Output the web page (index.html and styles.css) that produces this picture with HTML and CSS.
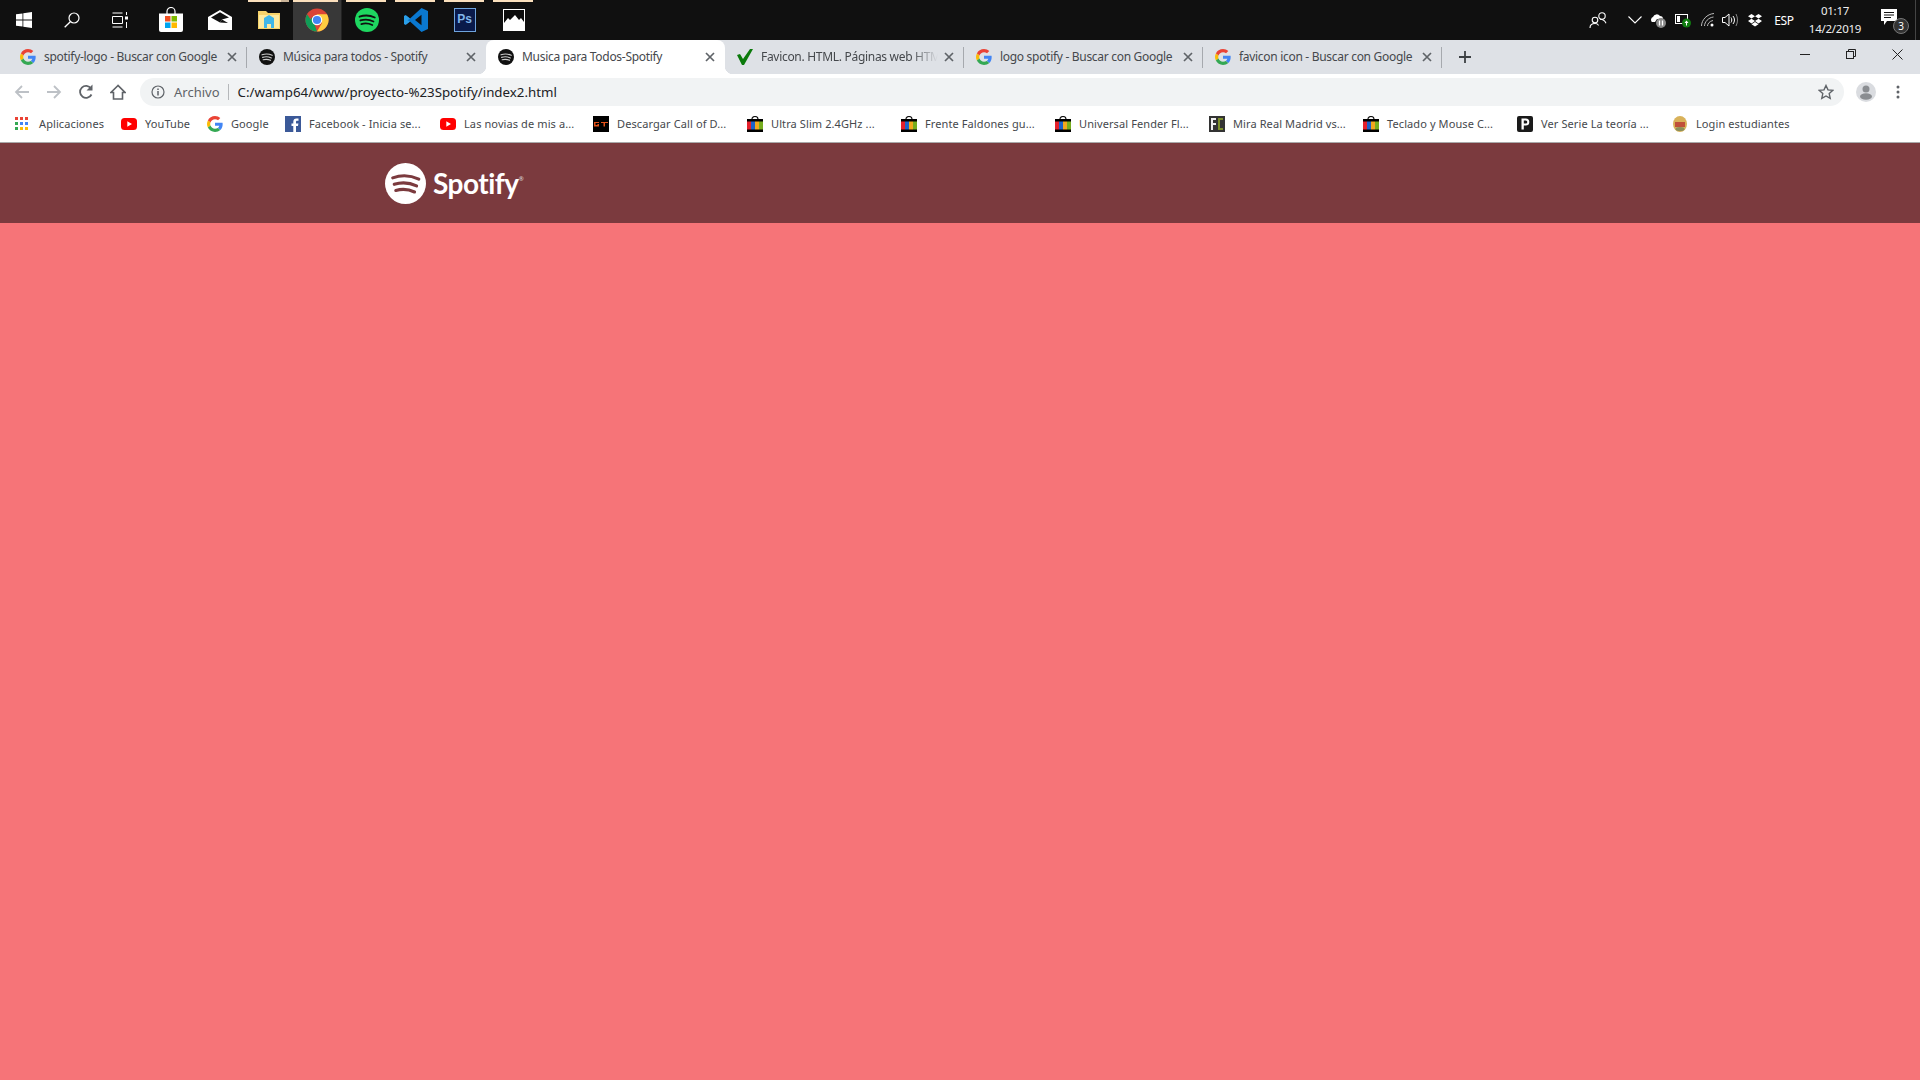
FILE: index.html
```html
<!DOCTYPE html>
<html lang="es">
<head>
<meta charset="utf-8">
<title>Musica para Todos-Spotify</title>
<link rel="stylesheet" href="styles.css">
</head>
<body>
<svg class="defs" width="0" height="0" aria-hidden="true">
  <symbol id="g" viewBox="0 0 48 48">
    <path fill="#EA4335" d="M24 9.5c3.5 0 6.700 1.300 9.100 3.500l6.800-6.800C35.800 2.400 30.300 0 24 0 14.600 0 6.500 5.400 2.600 13.200l7.900 6.100C12.400 13.600 17.700 9.500 24 9.500z"/>
    <path fill="#4285F4" d="M47 24.500c0-1.600-.1-3.100-.4-4.500H24v9h12.900c-.6 3-2.200 5.500-4.700 7.200l7.700 6C44.400 38 47 31.900 47 24.500z"/>
    <path fill="#FBBC05" d="M10.500 28.700c-.5-1.500-.8-3-.8-4.700s.3-3.200.8-4.700l-7.900-6.100C1 16.500 0 20.100 0 24s1 7.500 2.600 10.800l7.900-6.100z"/>
    <path fill="#34A853" d="M24 48c6.500 0 11.900-2.100 15.900-5.800l-7.700-6c-2.200 1.400-4.900 2.300-8.200 2.300-6.300 0-11.600-4.200-13.500-9.800l-7.900 6.100C6.500 42.600 14.600 48 24 48z"/>
  </symbol>
  <symbol id="spot" viewBox="0 0 40 40">
    <circle cx="20" cy="20" r="20" fill="currentColor"/>
    <path d="M7.500 14.500c8-2.800 18-2.300 25.500 1.300M9 20.800c7-2.200 15-1.700 21.800 1.600M10.500 26.800c6-1.700 12.500-1.300 18.300 1.500" fill="none" stroke="var(--wave)" stroke-width="3" stroke-linecap="round"/>
  </symbol>
  <symbol id="x" viewBox="0 0 16 16">
    <path d="M4 4l8 8M12 4l-8 8" stroke="#5f6368" stroke-width="1.700" fill="none"/>
  </symbol>
  <symbol id="shop" viewBox="0 0 16 16">
    <path d="M5 4.500V3a3 2.500 0 0 1 6 0v1.500" fill="none" stroke="#111" stroke-width="1.200"/>
    <rect y="3" width="16" height="13" fill="#000"/>
    <rect y="5.500" width="4" height="8" fill="#e5202b"/>
    <rect x="4" y="5.500" width="4" height="8" fill="#1c62c9"/>
    <rect x="8" y="5.500" width="4" height="8" fill="#f2a81d"/>
    <rect x="12" y="5.500" width="4" height="8" fill="#76ad1e"/>
  </symbol>
  <symbol id="yt" viewBox="0 0 16 16">
    <rect y="2" width="16" height="12" rx="3.500" fill="#f00"/>
    <path d="M6.300 5.300v5.400L11 8z" fill="#fff"/>
  </symbol>
</svg>

<div class="screen">
  <div class="taskbar">
    <div class="task-item narrow"><svg width="16" height="16" viewBox="0 0 16 16"><path fill="#fff" d="M0 2.300l6.500-.9v6.200H0zM7.300 1.300L16 0v7.600H7.300zM0 8.400h6.500v6.200L0 13.700zM7.300 8.400H16V16l-8.700-1.200z"/></svg></div>
    <div class="task-item narrow"><svg width="16" height="16" viewBox="0 0 16 16"><circle cx="10" cy="6" r="5" fill="none" stroke="#fff" stroke-width="1.200"/><path d="M6.300 9.700L.7 15.300" stroke="#fff" stroke-width="1.300"/></svg></div>
    <div class="task-item narrow"><svg width="16" height="16" viewBox="0 0 16 16" fill="none" stroke="#fff"><path d="M.5 1h10M.5 4.500h10v7H.5zM.5 15h10M14.500 0v3M14.500 10v6"/><rect x="13" y="4.500" width="3" height="3" fill="#fff" stroke="none"/></svg></div>
    <div class="task-item store"><svg width="24" height="26" viewBox="0 0 24 26"><path d="M8 7V4.500a4 4 0 0 1 8 0V7" fill="none" stroke="#fff" stroke-width="1.200"/><path d="M0 6.500h24V23a2 2 0 0 1-2 2H2a2 2 0 0 1-2-2z" fill="#fff"/><rect x="6" y="9" width="5.500" height="5.500" fill="#f25022"/><rect x="12.500" y="9" width="5.500" height="5.500" fill="#7fba00"/><rect x="6" y="15.500" width="5.500" height="5.500" fill="#00a4ef"/><rect x="12.500" y="15.500" width="5.500" height="5.500" fill="#ffb900"/></svg></div>
    <div class="task-item"><svg width="24" height="20" viewBox="0 0 24 20"><path d="M0 7L12 0l12 7v13H0z" fill="#fff"/><path d="M3 7.500l9-5.300 9 5.300-7 2-2 3z" fill="#101010"/><path d="M12 12.500l2-3 6 3.500z" fill="#101010"/></svg></div>
    <div class="task-item ind-folder"><svg width="22" height="20" viewBox="0 0 22 20"><path d="M0 1h8l2 2h12v16H0z" fill="#f6d36b"/><path d="M1 5h20v13H1z" fill="#fdeaa0"/><path d="M6 8l5-3 5 3v10h-3v-4H9v4H6z" fill="#3fb6e8"/></svg></div>
    <div class="task-item active ind-chrome"><svg width="24" height="24" viewBox="0 0 48 48"><circle cx="24" cy="24" r="23" fill="#db4437"/><path d="M24 47A23 23 0 0 1 4 35.500L14 18l10 29z" fill="#0f9d58"/><path d="M4 35.500A23 23 0 0 1 4.100 12.500L16 30l-2 8z" fill="#0f9d58"/><path d="M24 47a23 23 0 0 0 20-34.500H24l10 17.500z" fill="#ffcd40"/><circle cx="24" cy="24" r="10.500" fill="#fff"/><circle cx="24" cy="24" r="8.200" fill="#4285f4"/></svg></div>
    <div class="task-item ind"><svg class="spot-green" width="24" height="24"><use href="#spot"/></svg></div>
    <div class="task-item ind"><svg width="24" height="24" viewBox="0 0 24 24"><path d="M17.500 0L24 3v18l-6.500 3L6 13.500 1.800 16.800 0 16V8l1.800-.8L6 10.500zM17.500 6.800L11 12l6.500 5.200z" fill="#0a78d0"/><path d="M0 8l1.800-.8L6 10.500l-2.500 1.800 2.500 1.200L1.800 16.800 0 16z" fill="#2b9fe8"/></svg></div>
    <div class="task-item ind"><div class="ps">Ps</div></div>
    <div class="task-item ind"><svg width="22" height="22" viewBox="0 0 22 22"><rect width="22" height="22" fill="#fff"/><path d="M1 1h20v12l-3-4-2 2-4-5-5 5-2-2-4 5z" fill="#0c0c0c"/></svg></div>

    <div class="tray">
      <svg class="t-people" width="20" height="18" viewBox="0 0 20 18" fill="none" stroke="#fff" stroke-width="1.100"><circle cx="13" cy="5" r="3.200"/><circle cx="6" cy="9" r="2.800"/><path d="M1 17c0-3 2-4.500 5-4.500s3 1 3.500 2M11 8.300c3 0 5 1.500 6 4"/></svg>
      <svg class="t-chev" width="14" height="8" viewBox="0 0 14 8"><path d="M.5.500L7 7 13.500.5" fill="none" stroke="#fff" stroke-width="1.100"/></svg>
      <svg class="t-cloud" width="16" height="16" viewBox="0 0 16 16"><path d="M2 10a3 3 0 0 1 1-5 4 4 0 0 1 7-1c2 0 3 1 3 3H7l-2 3z" fill="#fff"/><circle cx="11" cy="11" r="5" fill="#8a8a8a"/><path d="M9.500 8.500v5M12.500 8.500v5" stroke="#fff" stroke-width="1.300"/></svg>
      <svg class="t-batt" width="16" height="16" viewBox="0 0 16 16"><rect x=".5" y="2.500" width="12" height="9" fill="none" stroke="#fff"/><rect x="2" y="4" width="3" height="6" fill="#fff"/><circle cx="11.500" cy="11" r="4.500" fill="#107c10"/><path d="M11.500 8.500l2 2.500h-1.500v2.500h-1V11h-1.500z" fill="#fff"/></svg>
      <svg class="t-wifi" width="14" height="14" viewBox="0 0 14 14" fill="none" stroke="#bbb" stroke-width="1"><path d="M.5 13C.5 7 6 1 13 .5M3.500 13c0-4 4-8.500 9-9M6.500 13c0-2 2-5 5.500-5.500"/><circle cx="11" cy="12" r="1.500" fill="#fff" stroke="none"/></svg>
      <svg class="t-sound" width="16" height="14" viewBox="0 0 16 14" fill="none" stroke="#fff"><path d="M.5 4.500h2.500L7 1v12L3 9.500H.5z"/><path d="M9 4.500c1 1.500 1 3.500 0 5M11 3c2 2.500 2 5.500 0 8"/><path d="M14 1c2 4 2 8 0 12" stroke="#888"/></svg>
      <svg class="t-drop" width="14" height="13" viewBox="0 0 14 13"><path d="M3.500 0L7 2.300 3.500 4.600 0 2.300zM10.500 0L14 2.300l-3.500 2.300L7 2.300zM3.500 4.800L7 7.100 3.500 9.400 0 7.100zM10.500 4.800L14 7.100l-3.500 2.300L7 7.100zM3.500 10.200L7 8l3.500 2.200L7 12.500z" fill="#fff"/></svg>
      <span class="t-lang">ESP</span>
      <div class="t-clock"><span>01:17</span><span>14/2/2019</span></div>
      <div class="t-note">
        <svg width="16" height="17" viewBox="0 0 16 17"><path d="M0 0h16v12H6l-3 4v-4H0z" fill="#fff"/><path d="M3 3.500h10M3 6h10M3 8.500h7" stroke="#101010"/></svg>
        <span class="note-badge">3</span>
      </div>
    </div>
  </div>

  <div class="tabbar">
    <div class="tab sep"><svg class="fav"><use href="#g"/></svg><span class="tab-title">spotify-logo - Buscar con Google</span><svg class="close"><use href="#x"/></svg></div>
    <div class="tab"><svg class="fav spot-black"><use href="#spot"/></svg><span class="tab-title">Música para todos - Spotify</span><svg class="close"><use href="#x"/></svg></div>
    <div class="tab current"><svg class="fav spot-black"><use href="#spot"/></svg><span class="tab-title">Musica para Todos-Spotify</span><svg class="close"><use href="#x"/></svg></div>
    <div class="tab sep"><svg class="fav" viewBox="0 0 16 16"><path d="M0 6l3-1 3 5L13 0h3L7 16H5z" fill="#0b7a0b"/></svg><span class="tab-title fade">Favicon. HTML. Páginas web HTML</span><svg class="close"><use href="#x"/></svg></div>
    <div class="tab sep"><svg class="fav"><use href="#g"/></svg><span class="tab-title">logo spotify - Buscar con Google</span><svg class="close"><use href="#x"/></svg></div>
    <div class="tab sep"><svg class="fav"><use href="#g"/></svg><span class="tab-title">favicon icon - Buscar con Google</span><svg class="close"><use href="#x"/></svg></div>
    <svg class="newtab" width="14" height="14" viewBox="0 0 14 14"><path d="M7 1v12M1 7h12" stroke="#3c4043" stroke-width="1.800"/></svg>
    <div class="winctl">
      <svg width="10" height="10" viewBox="0 0 10 10"><path d="M0 5.500h10" stroke="#222"/></svg>
      <svg width="10" height="10" viewBox="0 0 10 10" fill="none" stroke="#222"><rect x=".5" y="2.500" width="7" height="7"/><path d="M2.500 2.500v-2h7v7h-2"/></svg>
      <svg width="11" height="11" viewBox="0 0 11 11"><path d="M.5.500l10 10M10.500.5l-10 10" stroke="#222"/></svg>
    </div>
  </div>

  <div class="toolbar">
    <svg class="nav-back" width="16" height="16" viewBox="0 0 16 16" fill="none" stroke="#bdc1c6" stroke-width="1.800"><path d="M15 8H2M8 2L2 8l6 6"/></svg>
    <svg class="nav-fwd" width="16" height="16" viewBox="0 0 16 16" fill="none" stroke="#bdc1c6" stroke-width="1.800"><path d="M1 8h13M8 2l6 6-6 6"/></svg>
    <svg class="nav-reload" width="16" height="16" viewBox="0 0 16 16" fill="none" stroke="#5f6368" stroke-width="1.800"><path d="M13.500 10.500A6 6 0 1 1 13 4.500"/><path d="M14.500 0.500v6h-6z" fill="#5f6368" stroke="none"/></svg>
    <svg class="nav-home" width="16" height="16" viewBox="0 0 16 16" fill="none" stroke="#5f6368" stroke-width="1.600"><path d="M8 1.500L1 8.500h2.500V15h9V8.500H15z"/></svg>
    <div class="omnibox">
      <svg class="info" width="14" height="14" viewBox="0 0 14 14" fill="none" stroke="#5f6368" stroke-width="1.200"><circle cx="7" cy="7" r="6"/><path d="M7 6v4.500M7 3.500v1.500" stroke-width="1.500"/></svg>
      <span class="scheme">Archivo</span>
      <span class="url">C:/wamp64/www/proyecto-%23Spotify/index2.html</span>
      <svg class="star" width="16" height="16" viewBox="0 0 16 16"><path d="M8 1.500l2 4.400 4.700.5-3.500 3.200 1 4.700L8 12l-4.200 2.300 1-4.700L1.300 6.400 6 5.900z" fill="none" stroke="#5f6368" stroke-width="1.400"/></svg>
    </div>
    <svg class="avatar" width="20" height="20" viewBox="0 0 20 20"><circle cx="10" cy="10" r="10" fill="#dadce0"/><circle cx="10" cy="7" r="3.500" fill="#8a8d91"/><ellipse cx="10" cy="14.500" rx="6" ry="3.200" fill="#8a8d91"/></svg>
    <svg class="dots" width="4" height="14" viewBox="0 0 4 14"><circle cx="2" cy="2" r="1.500" fill="#5f6368"/><circle cx="2" cy="7" r="1.500" fill="#5f6368"/><circle cx="2" cy="12" r="1.500" fill="#5f6368"/></svg>
  </div>

  <div class="bookmarks">
    <div class="bm"><svg class="fav" viewBox="0 0 16 16"><rect x="0" y="1" width="3" height="3" fill="#ea4335"/><rect x="5" y="1" width="3" height="3" fill="#ea4335"/><rect x="10" y="1" width="3" height="3" fill="#ea4335"/><rect x="0" y="6" width="3" height="3" fill="#34a853"/><rect x="5" y="6" width="3" height="3" fill="#4285f4"/><rect x="10" y="6" width="3" height="3" fill="#4285f4"/><rect x="0" y="11" width="3" height="3" fill="#34a853"/><rect x="5" y="11" width="3" height="3" fill="#fbbc05"/><rect x="10" y="11" width="3" height="3" fill="#fbbc05"/></svg><span>Aplicaciones</span></div>
    <div class="bm"><svg class="fav"><use href="#yt"/></svg><span>YouTube</span></div>
    <div class="bm"><svg class="fav"><use href="#g"/></svg><span>Google</span></div>
    <div class="bm"><svg class="fav" viewBox="0 0 16 16"><rect width="16" height="16" fill="#3b5998"/><path d="M11 16v-6h2l.4-2.500H11V6c0-.8.3-1.300 1.300-1.300h1.200V2.500h-2C9.500 2.500 8.300 3.700 8.300 5.800v1.700H6.500V10h1.800v6z" fill="#fff"/></svg><span>Facebook - Inicia se...</span></div>
    <div class="bm"><svg class="fav"><use href="#yt"/></svg><span>Las novias de mis a...</span></div>
    <div class="bm"><svg class="fav" viewBox="0 0 16 16"><rect width="16" height="16" fill="#000"/><path d="M1 6h5v1H2.500v2H5V8.500H4V8h2v2.500H1zM8 6h7v1h-3v3.500h-1.500V7H8z" fill="#e2521a"/></svg><span>Descargar Call of D...</span></div>
    <div class="bm"><svg class="fav"><use href="#shop"/></svg><span>Ultra Slim 2.4GHz ...</span></div>
    <div class="bm"><svg class="fav"><use href="#shop"/></svg><span>Frente Faldones gu...</span></div>
    <div class="bm"><svg class="fav"><use href="#shop"/></svg><span>Universal Fender Fl...</span></div>
    <div class="bm"><svg class="fav" viewBox="0 0 16 16"><rect width="16" height="16" fill="#333"/><path d="M2 2h5v2H4v3h3v2H4v5H2z" fill="#eee"/><path d="M9 2h5v2h-3v8h3v2H9z" fill="#7c8f2a"/></svg><span>Mira Real Madrid vs...</span></div>
    <div class="bm"><svg class="fav"><use href="#shop"/></svg><span>Teclado y Mouse C...</span></div>
    <div class="bm"><svg class="fav" viewBox="0 0 16 16"><rect width="16" height="16" rx="2" fill="#1a1a1a"/><path d="M4.500 2.500h4.300a3.500 3.500 0 0 1 0 7H6.800v4H4.500zM6.800 4.500v3h2a1.500 1.500 0 0 0 0-3z" fill="#fff" fill-rule="evenodd"/></svg><span>Ver Serie La teoría ...</span></div>
    <div class="bm"><svg class="fav" viewBox="0 0 16 16"><ellipse cx="8" cy="8" rx="7" ry="8" fill="#d9b25a"/><rect x="3" y="6" width="10" height="5" fill="#c0503a"/><ellipse cx="8" cy="13" rx="4.500" ry="2" fill="#8c8f5a"/></svg><span>Login estudiantes</span></div>
  </div>

  <header class="site-header">
    <div class="logo">
      <svg class="logo-mark" width="41" height="41"><use href="#spot"/></svg>
      <span class="logo-word">Spotify</span><span class="logo-reg">®</span>
    </div>
  </header>
  <main class="site-body"></main>
</div>
</body>
</html>
```
FILE: styles.css
```css
* { box-sizing: border-box; }
html, body { margin: 0; height: 100%; overflow: hidden; }
body { font-family: "Noto Sans", "Open Sans", sans-serif; font-size: 12px; color: #3c4043; }
svg { display: block; flex: none; }
.defs { position: absolute; }
.screen { display: flex; flex-direction: column; height: 1080px; }

/* taskbar */
.taskbar { display: flex; height: 40px; background: #101010; color: #fff; flex: none; }
.task-item { position: relative; width: 49px; display: flex; align-items: center; justify-content: center; }
.task-item.narrow { width: 48px; }
.task-item.store { margin-left: 2px; }
.task-item.active { background: #383838; border-right: 1px solid #222; }
.ind::before, .ind-folder::before, .ind-chrome::before { content: ""; position: absolute; top: 0; left: 4px; right: 5px; height: 2px; background: #fbe0bd; }
.ind-folder::before { left: 4px; right: 4px; background: linear-gradient(90deg, #fbe0bd 0 80%, #c9b398 80%); }
.ind-chrome::before { left: 0; right: 3px; }
.spot-green { color: #1ed760; --wave: #101010; }
.spot-black { color: #111; --wave: #ccc; }
.ps { width: 22px; height: 24px; background: #0a1a4a; border: 1.500px solid #6fa4dc; color: #7fb5ea; font: 700 12px/20px "Liberation Sans", sans-serif; text-align: center; }

.tray { margin-left: auto; display: flex; align-items: center; padding-right: 5px; position: relative; }
.tray::after { content: ""; position: absolute; right: 4px; top: 0; bottom: 0; width: 1px; background: #444; }
.t-people { margin-right: 19px; }
.t-chev { margin-right: 8px; }
.t-cloud { margin-right: 9px; }
.t-batt { margin-right: 10px; }
.t-wifi { margin-right: 7px; }
.t-sound { margin-right: 10px; }
.t-drop { margin-right: 11px; }
.t-lang { width: 22px; margin-right: 13px; font-size: 12px; letter-spacing: -.3px; color: #fff; text-align: center; }
.t-clock { width: 54px; display: flex; flex-direction: column; align-items: center; gap: 2px; font-size: 11.500px; letter-spacing: -.25px; line-height: 16px; color: #eee; margin-right: 19px; }
.t-note { position: relative; width: 28px; height: 28px; padding: 3px 0 0 0; margin-right: 6px; }
.note-badge { position: absolute; right: 0; bottom: 0; width: 16px; height: 16px; border-radius: 50%; background: #333; border: 1px solid #777; color: #fff; font-size: 10px; line-height: 14px; text-align: center; }

/* tabs */
.tabbar { display: flex; align-items: stretch; height: 34px; padding-left: 8px; background: #dee1e6; flex: none; }
.tab { position: relative; width: 239px; display: flex; align-items: center; padding: 0 7px 0 12px; gap: 8px; }
.tab.sep::after { content: ""; position: absolute; right: 0; top: 7px; bottom: 6px; width: 1px; background: #a6a9ae; }
.tab.current { background: #fff; border-radius: 8px 8px 0 0; }
.tab.current::before { content: ""; position: absolute; left: -8px; right: -8px; bottom: 0; height: 8px; z-index: 0;
  background:
    radial-gradient(circle at 0 0, #dee1e6 8px, #fff 8.500px) left bottom / 8px 8px no-repeat,
    radial-gradient(circle at 100% 0, #dee1e6 8px, #fff 8.500px) right bottom / 8px 8px no-repeat; }
.fav { width: 16px; height: 16px; flex: none; position: relative; }
.tab-title { flex: 1; min-width: 0; margin-right: -5px; padding-bottom: 1px; white-space: nowrap; overflow: hidden; color: #45484c; position: relative; letter-spacing: -.3px; }
.fade { -webkit-mask-image: linear-gradient(90deg, #000 85%, transparent 100%); mask-image: linear-gradient(90deg, #000 85%, transparent 100%); }
.close { width: 16px; height: 16px; position: relative; }
.newtab { align-self: center; margin-left: 16px; }
.winctl { margin-left: auto; display: flex; align-items: center; gap: 36px; padding: 0 17px 6px 0; }

/* toolbar */
.toolbar { display: flex; align-items: center; height: 32px; padding: 4px 0 0 14px; background: #fff; flex: none; }
.nav-back { margin-right: 16px; }
.nav-fwd { margin-right: 16px; }
.nav-reload { margin-right: 16px; }
.nav-home { margin-right: 14px; }
.omnibox { width: 1704px; height: 28px; border-radius: 14px; background: #f1f3f4; display: flex; align-items: center; padding: 0 10px 0 11px; }
.scheme { margin-left: 9px; padding-right: 8px; border-right: 1px solid #b5b7ba; line-height: 16px; color: #5f6368; font-size: 13px; }
.url { margin-left: 9px; color: #202124; font-size: 13.300px; }
.star { margin-left: auto; }
.avatar { margin-left: 12px; }
.dots { margin-left: 20px; }

/* bookmarks */
.bookmarks { display: grid; grid-template-columns: 106px 86px 78px 155px 153px 154px 154px 154px 154px 154px 154px 155px auto; align-items: center; height: 37px; padding: 0 0 1px 15px; background: #fff; border-bottom: 1px solid #a9a9a9; flex: none; }
.bm { display: flex; align-items: center; gap: 8px; font-size: 11px; letter-spacing: .1px; color: #45484c; white-space: nowrap; }

/* page */
.site-header { height: 80px; background: #7b3a3e; display: flex; align-items: center; padding-left: 385px; flex: none; }
.logo { display: flex; align-items: center; color: #fff; --wave: #7b3a3e; }
.logo-word { margin-left: 7px; font: 700 28px/1 "Lato", sans-serif; letter-spacing: -.5px; }
.logo-reg { font-size: 6px; align-self: flex-start; margin-top: 12px; color: #ddd; }
.site-body { flex: 1; background: #f67478; }
```
